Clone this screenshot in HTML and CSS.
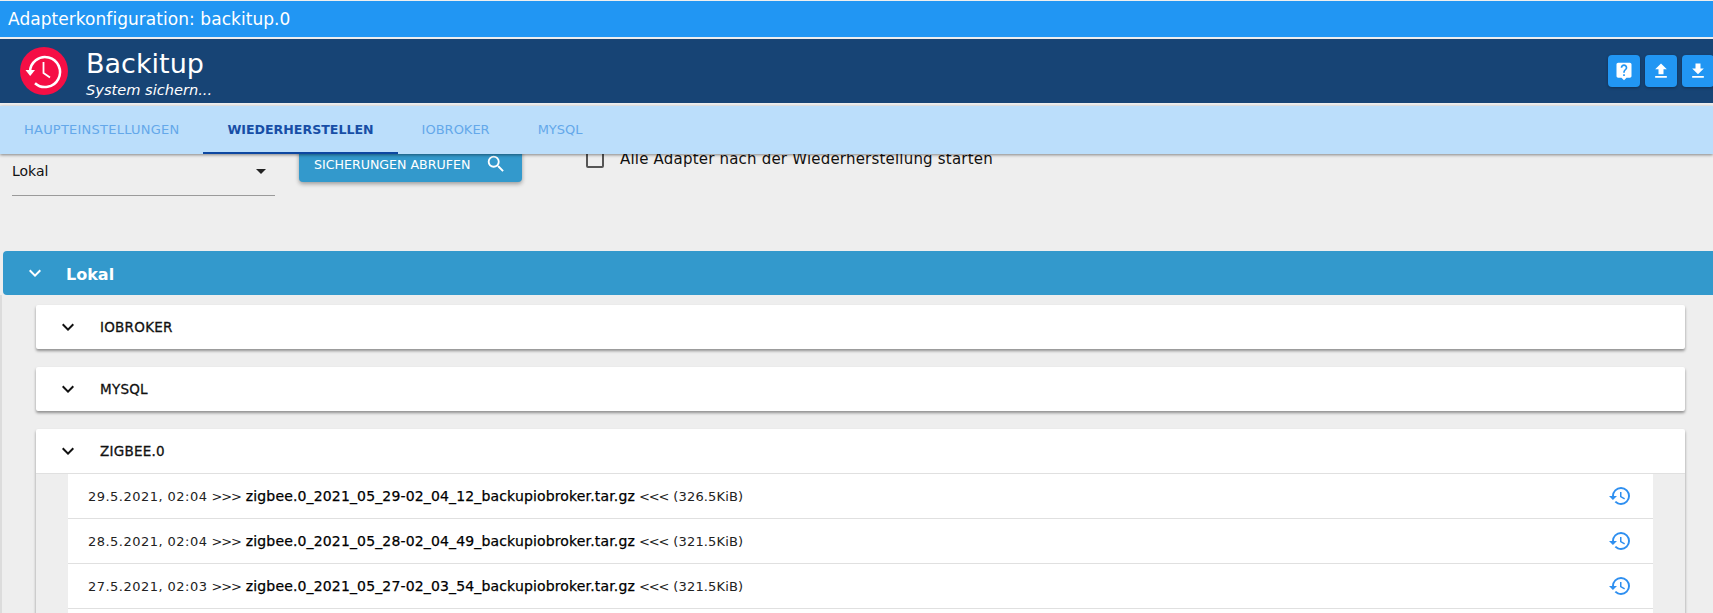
FILE: index.html
```html
<!DOCTYPE html>
<html lang="de">
<head>
<meta charset="utf-8">
<title>Adapterkonfiguration: backitup.0</title>
<link rel="stylesheet" href="styles.css">
</head>
<body>
<div class="titlebar">Adapterkonfiguration: backitup.0</div>
<header class="header">
  <div class="logo">
    <svg viewBox="0 0 48 48" width="48" height="48"><path class="logo-line" d="M10 25A15 15 0 1 1 15 36.2"/><path class="logo-line logo-hand" d="M23.5 15V26L30 30.5"/><path fill="#fff" d="M5.5 23h9.5l-4.8 6z"/></svg>
  </div>
  <div class="brand">
    <div class="brand-name">Backitup</div>
    <div class="brand-sub">System sichern...</div>
  </div>
  <div class="actions">
    <button class="action"><svg viewBox="0 0 24 24" width="20" height="20"><path fill="#fff" d="M19 2H5c-1.11 0-2 .9-2 2v14c0 1.1.89 2 2 2h4l3 3 3-3h4c1.1 0 2-.9 2-2V4c0-1.1-.9-2-2-2zm-6 16h-2v-2h2v2zm2.07-7.75l-.9.92C13.45 11.9 13 12.5 13 14h-2v-.5c0-1.1.45-2.1 1.17-2.83l1.24-1.26c.37-.36.59-.86.59-1.41 0-1.1-.9-2-2-2s-2 .9-2 2H8c0-2.21 1.79-4 4-4s4 1.79 4 4c0 .88-.36 1.68-.93 2.25z"/></svg></button>
    <button class="action"><svg viewBox="0 0 24 24" width="20" height="20"><path fill="#fff" d="M9 16h6v-6h4l-7-7-7 7h4zm-4 2h14v2H5z"/></svg></button>
    <button class="action"><svg viewBox="0 0 24 24" width="20" height="20"><path fill="#fff" d="M19 9h-4V3H9v6H5l7 7 7-7zM5 18v2h14v-2H5z"/></svg></button>
  </div>
</header>
<nav class="tabs">
  <a class="tab tab-first">Haupteinstellungen</a>
  <a class="tab tab-active">Wiederherstellen</a>
  <a class="tab">ioBroker</a>
  <a class="tab">MySQL</a>
</nav>
<main class="content">
  <section class="controls">
    <div class="select">
      <span>Lokal</span>
      <svg viewBox="0 0 24 24" width="24" height="24"><path fill="#222" d="M7 10l5 5 5-5z"/></svg>
    </div>
    <button class="fetch">
      <span>Sicherungen abrufen</span>
      <svg viewBox="0 0 24 24" width="22" height="22"><path fill="#fff" d="M15.5 14h-.79l-.28-.27A6.471 6.471 0 0 0 16 9.5 6.5 6.5 0 1 0 9.5 16c1.61 0 3.09-.59 4.23-1.57l.27.28v.79l5 4.99L20.49 19l-4.99-5zm-6 0C7.01 14 5 11.99 5 9.5S7.01 5 9.5 5 14 7.01 14 9.5 11.99 14 9.5 14z"/></svg>
    </button>
    <label class="check"><span class="box"></span><span>Alle Adapter nach der Wiederherstellung starten</span></label>
  </section>

  <section class="panel">
    <div class="panel-head">
      <svg viewBox="0 0 24 24" width="24" height="24"><path fill="#fff" d="M16.59 8.59L12 13.17 7.41 8.59 6 10l6 6 6-6z"/></svg>
      <span class="panel-title">Lokal</span>
    </div>
    <div class="panel-body">
      <div class="card">
        <div class="card-head">
          <svg viewBox="0 0 24 24" width="24" height="24"><path fill="#111" d="M16.59 8.59L12 13.17 7.41 8.59 6 10l6 6 6-6z"/></svg>
          <span>IOBROKER</span>
        </div>
      </div>
      <div class="card">
        <div class="card-head">
          <svg viewBox="0 0 24 24" width="24" height="24"><path fill="#111" d="M16.59 8.59L12 13.17 7.41 8.59 6 10l6 6 6-6z"/></svg>
          <span>MYSQL</span>
        </div>
      </div>
      <div class="card">
        <div class="card-head card-head-open">
          <svg viewBox="0 0 24 24" width="24" height="24"><path fill="#111" d="M16.59 8.59L12 13.17 7.41 8.59 6 10l6 6 6-6z"/></svg>
          <span>ZIGBEE.0</span>
        </div>
        <ul class="list">
          <li class="row">
            <span class="row-text"><span class="date">29.5.2021, 02:04</span> <span class="arrows">&gt;&gt;&gt;</span> <b>zigbee.0_2021_05_29-02_04_12_backupiobroker.tar.gz</b> <span class="arrows">&lt;&lt;&lt;</span> <span class="size">(326.5KiB)</span></span>
            <svg viewBox="0 0 24 24" width="24" height="24"><path fill="#2e8ff0" d="M13 3a9 9 0 0 0-9 9H1l3.89 3.89.07.14L9 12H6c0-3.87 3.13-7 7-7s7 3.13 7 7-3.13 7-7 7c-1.93 0-3.68-.79-4.94-2.06l-1.42 1.42A8.954 8.954 0 0 0 13 21a9 9 0 0 0 0-18zm-1 5v5l4.28 2.54.72-1.21-3.5-2.08V8H12z"/></svg>
          </li>
          <li class="row">
            <span class="row-text"><span class="date">28.5.2021, 02:04</span> <span class="arrows">&gt;&gt;&gt;</span> <b>zigbee.0_2021_05_28-02_04_49_backupiobroker.tar.gz</b> <span class="arrows">&lt;&lt;&lt;</span> <span class="size">(321.5KiB)</span></span>
            <svg viewBox="0 0 24 24" width="24" height="24"><path fill="#2e8ff0" d="M13 3a9 9 0 0 0-9 9H1l3.89 3.89.07.14L9 12H6c0-3.87 3.13-7 7-7s7 3.13 7 7-3.13 7-7 7c-1.93 0-3.68-.79-4.94-2.06l-1.42 1.42A8.954 8.954 0 0 0 13 21a9 9 0 0 0 0-18zm-1 5v5l4.28 2.54.72-1.21-3.5-2.08V8H12z"/></svg>
          </li>
          <li class="row">
            <span class="row-text"><span class="date">27.5.2021, 02:03</span> <span class="arrows">&gt;&gt;&gt;</span> <b>zigbee.0_2021_05_27-02_03_54_backupiobroker.tar.gz</b> <span class="arrows">&lt;&lt;&lt;</span> <span class="size">(321.5KiB)</span></span>
            <svg viewBox="0 0 24 24" width="24" height="24"><path fill="#2e8ff0" d="M13 3a9 9 0 0 0-9 9H1l3.89 3.89.07.14L9 12H6c0-3.87 3.13-7 7-7s7 3.13 7 7-3.13 7-7 7c-1.93 0-3.68-.79-4.94-2.06l-1.42 1.42A8.954 8.954 0 0 0 13 21a9 9 0 0 0 0-18zm-1 5v5l4.28 2.54.72-1.21-3.5-2.08V8H12z"/></svg>
          </li>
          <li class="row"></li>
        </ul>
      </div>
    </div>
  </section>
</main>
</body>
</html>
```

FILE: styles.css
```css
* { box-sizing: border-box; }
html, body { height: 100%; overflow: hidden; }
body {
  margin: 0;
  background: #eeeeee;
  color: #111;
  font-family: "DejaVu Sans", "Noto Sans", sans-serif;
}
svg { display: block; flex: none; }

.titlebar {
  margin-top: 1px;
  height: 36px;
  padding-left: 8px;
  background: #2196f3;
  color: #fff;
  font-size: 17px;
  letter-spacing: .05px;
  line-height: 37px;
}

.header {
  margin-top: 2px;
  height: 64px;
  display: flex;
  align-items: center;
  padding-left: 20px;
  background: #174475;
  color: #fff;
}
.logo {
  width: 48px;
  height: 48px;
  border-radius: 50%;
  background: #f50f45;
}
.logo-line { fill: none; stroke: #fff; stroke-width: 2.6; }
.logo-hand { stroke-width: 1.8; }
.brand { margin-left: 18px; padding-top: 3px; }
.brand-name { font-size: 27px; line-height: 34px; }
.brand-sub { font-size: 14.6px; line-height: 17px; font-style: italic; }
.actions { margin-left: auto; margin-right: -1px; display: flex; gap: 5px; }
.action {
  width: 32px;
  height: 32px;
  padding: 0;
  border: 0;
  border-radius: 4px;
  background: #2196f3;
  display: flex;
  align-items: center;
  justify-content: center;
  box-shadow: 0 1px 3px rgba(0,0,0,.3);
}

.tabs {
  position: relative;
  z-index: 2;
  margin-top: 3px;
  height: 48px;
  display: flex;
  background: #bbdefb;
  box-shadow: 0 1px 3px rgba(0,0,0,.45);
}
.tab {
  padding: 0 24px;
  line-height: 48px;
  font-size: 13px;
  text-transform: uppercase;
  color: #64a8ea;
}
.tab-first { letter-spacing: .23px; }
.tab-active {
  color: #174ea6;
  font-size: 12.6px;
  font-weight: 700;
  border-bottom: 2px solid #0d47a1;
}

.content { margin-top: -14px; height: 473px; overflow: hidden; }

.controls { height: 111px; display: flex; align-items: flex-start; }
.select {
  width: 263px;
  height: 56px;
  margin: 0 0 0 12px;
  padding-top: 19px;
  display: flex;
  justify-content: space-between;
  border-bottom: 1px solid #9a9a9a;
  font-size: 14px;
  line-height: 24px;
}
.select svg { margin-right: 2px; }
.fetch {
  width: 223px;
  height: 42px;
  margin-left: 24px;
  padding: 6px 15px 0 15px;
  border: 0;
  border-radius: 4px;
  display: flex;
  align-items: center;
  justify-content: space-between;
  background: #3399cc;
  color: #fff;
  font: 12.6px "DejaVu Sans", "Noto Sans", sans-serif;
  text-transform: uppercase;
  box-shadow: 0 2px 4px rgba(0,0,0,.35);
}
.check {
  margin-left: 64px;
  display: flex;
  align-items: center;
  height: 24px;
  font-size: 15px;
  letter-spacing: .2px;
  gap: 16px;
  margin-top: 7px;
}
.box { width: 18px; height: 18px; border: 2px solid #555; border-radius: 2px; }

.panel-head {
  margin-left: 3px;
  height: 44px;
  display: flex;
  align-items: center;
  padding-left: 20px;
  border-radius: 4px 0 0 4px;
  background: #3399cc;
  color: #fff;
  font-size: 16px;
  font-weight: 700;
  gap: 19px;
}
.panel-title { padding-top: 3px; }
.panel-body {
  padding: 10px 28px 0 34px;
  border-left: 2px solid #dcdcdc;
}
.card {
  background: #fff;
  margin-bottom: 18px;
  border-radius: 2px;
  box-shadow: 0 2px 3px rgba(0,0,0,.4);
}
.card-head {
  height: 44px;
  display: flex;
  align-items: center;
  padding-left: 20px;
  gap: 20px;
  font-size: 13.5px;
  letter-spacing: .25px;
  -webkit-text-stroke: .3px #111;
}
.card-head-open { height: 45px; border-bottom: 1px solid #e0e0e0; }
.list {
  margin: 0;
  padding: 0 32px;
  list-style: none;
  background: #eeeeee;
}
.row {
  height: 45px;
  padding: 0 21px 0 20px;
  display: flex;
  align-items: center;
  justify-content: space-between;
  background: #fff;
  border-bottom: 1px solid #e0e0e0;
}
.row-text { font-size: 13px; color: #222; }
.date { letter-spacing: .47px; }
.arrows { letter-spacing: -1.2px; margin-right: 1px; }
.size { letter-spacing: .15px; }
.row-text b { font-size: 14px; letter-spacing: .15px; font-weight: 400; color: #000; -webkit-text-stroke: .25px #000; }
```
